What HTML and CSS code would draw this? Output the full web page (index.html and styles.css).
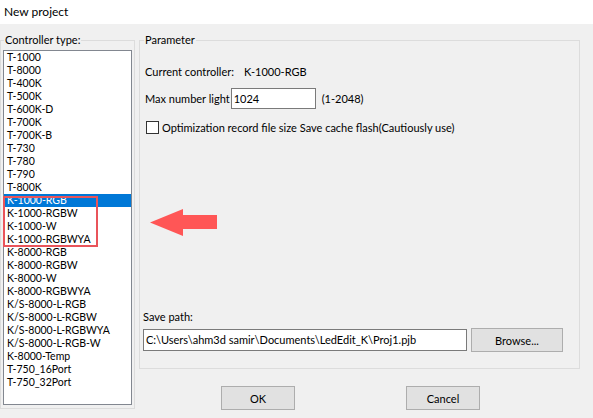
FILE: index.html
```html
<!DOCTYPE html>
<html>
<head>
<meta charset="utf-8">
<link rel="stylesheet" href="styles.css">
</head>
<body>
<div class="window">
  <div class="titlebar">New project</div>
  <div class="dialog">
    <fieldset class="group group-left">
      <legend>Controller type:</legend>
      <div class="listbox">
        <div class="item">T-1000</div>
        <div class="item">T-8000</div>
        <div class="item">T-400K</div>
        <div class="item">T-500K</div>
        <div class="item">T-600K-D</div>
        <div class="item">T-700K</div>
        <div class="item">T-700K-B</div>
        <div class="item">T-730</div>
        <div class="item">T-780</div>
        <div class="item">T-790</div>
        <div class="item">T-800K</div>
        <div class="item selected">K-1000-RGB</div>
        <div class="item">K-1000-RGBW</div>
        <div class="item">K-1000-W</div>
        <div class="item">K-1000-RGBWYA</div>
        <div class="item">K-8000-RGB</div>
        <div class="item">K-8000-RGBW</div>
        <div class="item">K-8000-W</div>
        <div class="item">K-8000-RGBWYA</div>
        <div class="item">K/S-8000-L-RGB</div>
        <div class="item">K/S-8000-L-RGBW</div>
        <div class="item">K/S-8000-L-RGBWYA</div>
        <div class="item">K/S-8000-L-RGB-W</div>
        <div class="item">K-8000-Temp</div>
        <div class="item">T-750_16Port</div>
        <div class="item">T-750_32Port</div>
        <div class="highlight-box"></div>
      </div>
    </fieldset>
    <div class="right-col">
      <fieldset class="group group-param">
        <legend>Parameter</legend>
        <div class="row row-current"><span class="lbl">Current controller:</span><span class="val">K-1000-RGB</span></div>
        <div class="row row-max"><span class="lbl">Max number light</span><span class="textbox tb-max">1024</span><span class="range">(1-2048)</span></div>
        <div class="row row-check"><span class="checkbox"></span><span class="check-label">Optimization record file size Save cache flash(Cautiously use)</span></div>
        <div class="save-section">
          <div class="save-label">Save path:</div>
          <div class="row row-path"><span class="textbox tb-path">C:\Users\ahm3d samir\Documents\LedEdit_K\Proj1.pjb</span><span class="button btn-browse">Browse...</span></div>
        </div>
      </fieldset>
      <div class="buttons">
        <span class="button btn-ok">OK</span>
        <span class="button btn-cancel">Cancel</span>
      </div>
    </div>
  </div>
  <svg class="arrow" width="67" height="28" viewBox="0 0 67 28">
    <path d="M0 13.5 L33 0 L33 6 L67 6 L67 20 L33 20 L33 27 Z" fill="#ff5656"/>
  </svg>
</div>
</body>
</html>
```
FILE: styles.css
```css
html, body {
  margin: 0;
  padding: 0;
}
body {
  width: 593px;
  height: 418px;
  background: #f0f0f0;
  font-family: "Lato", "Liberation Sans", sans-serif;
  font-size: 11px;
  color: #000;
  overflow: hidden;
}
.window {
  position: relative;
  width: 593px;
  height: 418px;
}
.titlebar {
  height: 24px;
  line-height: 24px;
  background: #fff;
  padding-left: 4px;
  font-size: 12px;
}
.dialog {
  display: flex;
  align-items: flex-start;
  padding-top: 9px;
}
.group {
  margin: 0;
  border: 1px solid #dcdcdc;
  box-sizing: border-box;
  min-width: 0;
}
.group legend {
  padding: 0 1px;
  margin-left: 1px;
  line-height: 14px;
  height: 14px;
}
.group-left {
  width: 135px;
  padding: 0 2px 3px 2px;
}
.listbox {
  position: relative;
  margin-top: 3px;
  width: 129px;
  height: 355px;
  box-sizing: border-box;
  border: 1px solid #828790;
  background: #fff;
}
.item {
  height: 13px;
  line-height: 13px;
  padding-left: 3px;
  font-size: 10.5px;
  white-space: nowrap;
}
.item.selected {
  background: #0078d7;
  color: #fff;
}
.highlight-box {
  position: absolute;
  left: -1px;
  top: 145px;
  width: 95px;
  height: 51px;
  box-sizing: border-box;
  border: 2px solid #e9545a;
}
.right-col {
  margin-left: 4px;
  width: 441px;
  display: flex;
  flex-direction: column;
}
.group-param {
  width: 441px;
  height: 336px;
  padding: 0 3px 16px 3px;
}
.row {
  display: flex;
  align-items: center;
  white-space: nowrap;
}
.row-current {
  margin-top: 17px;
  margin-left: 2px;
  height: 15px;
}
.row-current .val {
  margin-left: 10px;
}
.row-max {
  margin-top: 9px;
  margin-left: 2px;
}
.textbox {
  display: block;
  box-sizing: border-box;
  background: #fff;
  border: 1px solid #7a7a7a;
  padding-left: 2px;
  white-space: nowrap;
  overflow: hidden;
}
.tb-max {
  width: 85px;
  height: 21px;
  line-height: 19px;
  margin-left: 1px;
}
.range {
  margin-left: 6px;
}
.row-check {
  margin-top: 11px;
  margin-left: 3px;
  height: 14px;
}
.checkbox {
  display: block;
  width: 13px;
  height: 13px;
  box-sizing: border-box;
  border: 1px solid #333;
  background: #fff;
}
.check-label {
  margin-left: 3px;
}
.save-section {
  margin-top: 175px;
}
.save-label {
  line-height: 15px;
}
.row-path {
  margin-top: 4px;
}
.tb-path {
  width: 324px;
  height: 22px;
  line-height: 20px;
}
.button {
  display: flex;
  align-items: center;
  justify-content: center;
  box-sizing: border-box;
  background: #e1e1e1;
  border: 1px solid #adadad;
  height: 24px;
}
.btn-browse {
  width: 92px;
  margin-left: 4px;
}
.buttons {
  display: flex;
  margin-top: 17px;
  margin-left: 82px;
}
.btn-ok {
  width: 74px;
}
.btn-cancel {
  width: 74px;
  margin-left: 111px;
}
.arrow {
  position: absolute;
  left: 150px;
  top: 209px;
}
```
